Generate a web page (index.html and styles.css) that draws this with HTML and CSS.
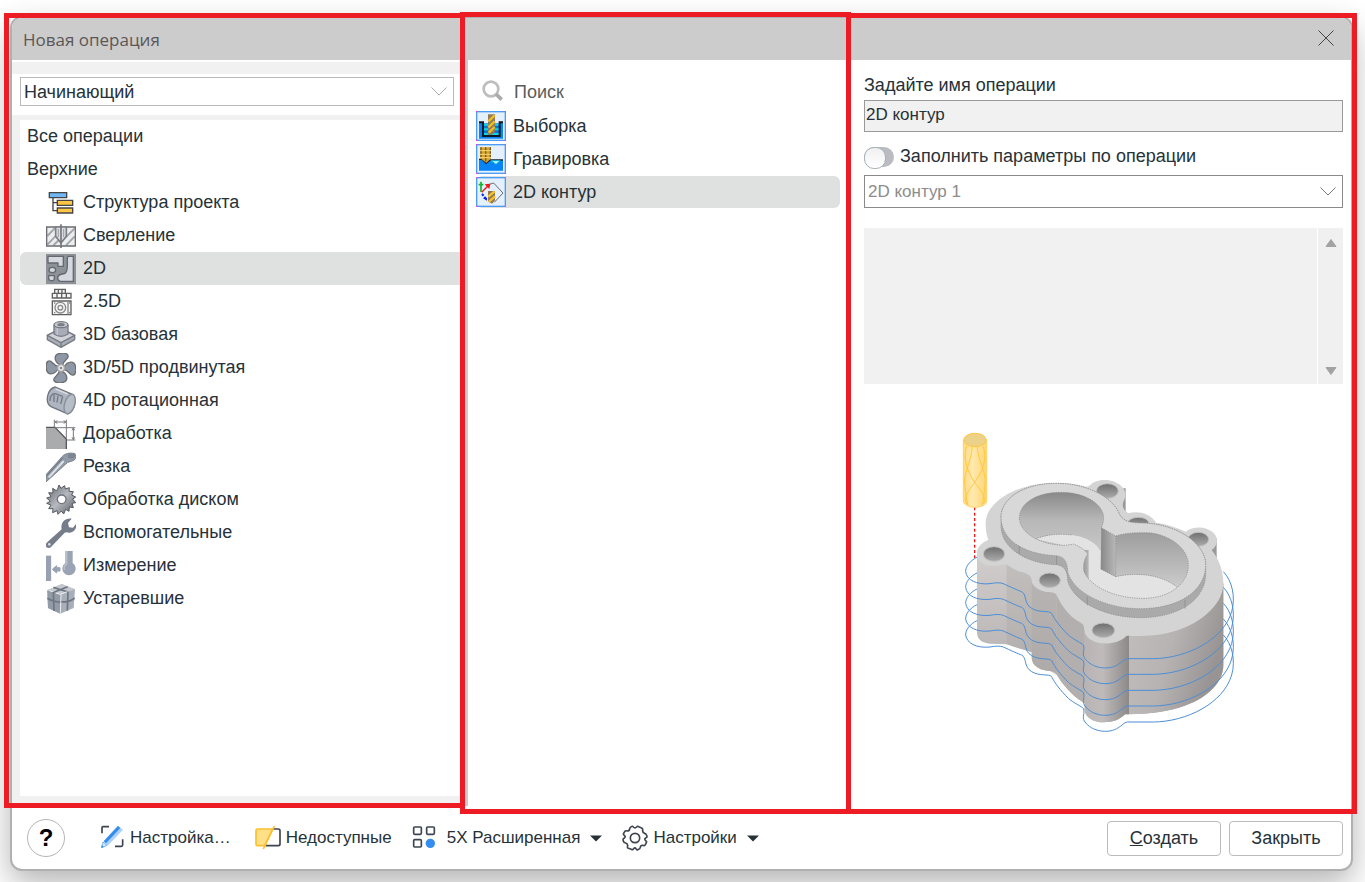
FILE: index.html
```html
<!DOCTYPE html>
<html lang="ru">
<head>
<meta charset="utf-8">
<meta name="viewport" content="width=device-width, initial-scale=1">
<title>Новая операция</title>
<link rel="stylesheet" href="styles.css">
</head>
<body>
<main class="window">
  <header class="titlebar">
    <h1 class="title">Новая операция</h1>
    <button class="close" type="button" aria-label="Закрыть окно">
      <svg width="16" height="16" viewBox="0 0 16 16"><path d="M0.5 0.5 15.5 15.5M15.5 0.5 0.5 15.5" stroke="#444" fill="none"/></svg>
    </button>
  </header>

  <div class="panes">
    <section class="pane pane-groups" aria-label="Группы операций">
      <div class="strip"></div>
      <div class="level">
        <div class="select-box">
          <select class="select select-level" aria-label="Уровень"><option>Начинающий</option></select>
          <svg class="chevron chevron-light" width="16" height="9" viewBox="0 0 16 9"><path d="M0.5 0.5 8 8 15.5 0.5"/></svg>
        </div>
      </div>
      <div class="group-frame">
        <ul class="groups">
          <li><button class="row" type="button">Все операции</button></li>
          <li><button class="row" type="button">Верхние</button></li>
          <li><button class="row row-child" type="button">
            <svg class="icon" viewBox="0 0 90 90" fill="none" stroke="#444" stroke-width="4"><path d="M21 29V68H34M21 44H34"/><path d="M10 14H62V29H10Z" fill="#6fb7f5"/><path d="M34 37H80V52H34ZM34 60H80V75H34Z" fill="#fcc545"/></svg>
            Структура проекта</button></li>
          <li><button class="row row-child" type="button">
            <svg class="icon" viewBox="0 0 90 90" fill="none"><path d="M2 18H88V75H2Z" fill="#eceef0"/><path d="M4 45 28 20M4 71 36 38M22 73 46 50M60 73 86 46M60 48 86 22" stroke="#a4a7ab" stroke-width="6"/><path d="M2 18H88V75H2Z" stroke="#6a6d72" stroke-width="4"/><path d="M29 18V46L45 66 61 46V18Z" fill="#dcdee2" stroke="#7b7e84" stroke-width="5"/><path d="M45 10V81" stroke="#73777d" stroke-width="5"/><path d="M37 24V48M53 24V48" stroke="#9a9da3" stroke-width="3"/></svg>
            Сверление</button></li>
          <li><button class="row row-child selected" type="button">
            <svg class="icon" viewBox="0 0 90 90" stroke="#636871" stroke-width="4" stroke-linejoin="round" fill="#d5d8de"><path d="M0 0H90V90H0Z" fill="#8d9299" stroke="none"/><path d="M6 7H52V37H36V27H6Z"/><path d="M68 7H82V82H42C30 76 34 62 48 60C62 61 64 48 64 34V14Q64 7 68 7Z"/><ellipse cx="19" cy="48" rx="10" ry="8"/><path d="M8 65H25V72Q25 82 15 80Q8 80 8 72Z"/></svg>
            2D</button></li>
          <li><button class="row row-child" type="button">
            <svg class="icon" viewBox="0 0 90 90" fill="#f5f5f5" stroke="#606060" stroke-width="4"><path d="M26 7H58V19H26ZM37 7V19M48 7V19M19 19H75V33H19ZM33 19V33M47 19V33M61 19V33M19 42H75V83H19Z"/><circle cx="43" cy="62" r="16" stroke="#8a8a8a"/><circle cx="43" cy="62" r="7" stroke="#8a8a8a"/><path d="M66 43V82M24 48H28M24 77H28M69 48H73M69 77H73" stroke="#888"/></svg>
            2.5D</button></li>
          <li><button class="row row-child" type="button">
            <svg class="icon" viewBox="0 0 90 90" stroke="#777b83" stroke-width="4" stroke-linejoin="round"><path d="M4 46 45 25 86 46V59L45 82 4 59Z" fill="#a9adb7"/><path d="M4 46 45 25 86 46 45 68Z" fill="#d1d3d8"/><path d="M45 68V82"/><path d="M24 14V42Q45 56 66 42V14" fill="#a7acb7"/><ellipse cx="45" cy="14" rx="21" ry="9" fill="#c7c9cf"/><ellipse cx="45" cy="14" rx="9" ry="3" fill="#82868f"/><path d="M34 24V45" stroke="#c5c8d0"/></svg>
            3D базовая</button></li>
          <li><button class="row row-child" type="button">
            <svg class="icon" viewBox="0 0 90 90" fill="#8e97a6" stroke="#6d6e72" stroke-width="4"><path d="M42 36C24 25 21 4 43 1C67-2 72 10 60 20C53 26 51 31 50 37Z"/><path d="M54 42C65 24 86 21 89 43C92 67 80 72 70 60C64 53 59 51 53 50Z"/><path d="M48 54C66 65 69 86 47 89C23 92 18 80 30 70C37 64 39 59 40 53Z"/><path d="M36 48C25 66 4 69 1 47C-2 23 10 18 20 30C26 37 31 39 37 40Z"/><circle cx="45" cy="45" r="10" fill="#ececee" stroke="#aaa"/><circle cx="45" cy="45" r="4" fill="#8a8a8a" stroke="none"/></svg>
            3D/5D продвинутая</button></li>
          <li><button class="row row-child" type="button">
            <svg class="icon" viewBox="0 0 90 90" stroke="#6f747d" stroke-width="4"><path d="M28 3 79 25C94 38 87 75 66 84L15 62C-5 49 4 8 28 3Z" fill="#aeb4c0"/><ellipse cx="71" cy="54" rx="15" ry="30" transform="rotate(17 71 54)" fill="#b7bdc7" stroke="#8a909a"/><path d="M12 45C11 32 18 22 27 23L50 31M24 26V48M36 30 33 50M50 31 44 54" fill="none" stroke="#747a84" stroke-width="4"/><path d="M29 9 65 24" stroke="#d5d8de" stroke-width="5"/></svg>
            4D ротационная</button></li>
          <li><button class="row row-child" type="button">
            <svg class="icon" viewBox="0 0 90 90" fill="none"><path d="M0 25H27L61 60V90H0Z" fill="#aaabad"/><path d="M0 25H27L61 60V90" stroke="#55575c" stroke-width="4"/><path d="M25 2V24M61 2V59M27 9H60M34 5 27 9 34 13M53 5 60 9 53 13M27 26H88M62 63H88M82 27V62M78 34 82 27 86 34M78 55 82 62 86 55" stroke="#77797c" stroke-width="3"/></svg>
            Доработка</button></li>
          <li><button class="row row-child" type="button">
            <svg class="icon" viewBox="0 0 90 90" stroke="#7b838e" stroke-width="3" stroke-linejoin="round"><path d="M0 68 45 18C54 4 72 1 87 5L90 17C88 25 76 28 65 31L0 90Z" fill="#919aa7"/><path d="M8 76 53 27" stroke="#dfe2e7" stroke-width="6"/><path d="M0 73 51 17" stroke="#687079"/><ellipse cx="76" cy="12" rx="10" ry="6" fill="#7e8692"/></svg>
            Резка</button></li>
          <li><button class="row row-child" type="button">
            <svg class="icon" viewBox="0 0 90 90"><defs><linearGradient id="disc" x2="1" y2="1"><stop stop-color="#62666e"/><stop offset=".5" stop-color="#b6b9bf"/><stop offset="1" stop-color="#565a61"/></linearGradient></defs><path d="M35 12 39 0 45 10 56 2 58 12 70 8 69 19 82 20 77 30 89 36 80 42 89 53 78 55 82 68 70 66 69 79 59 73 53 87 46 78 36 88 33 77 20 83 21 71 8 71 15 60 2 55 13 49 2 39 15 35 8 23 21 24 20 10 31 17Z" fill="url(#disc)" stroke="#555960" stroke-width="3"/><circle cx="47" cy="43" r="13" fill="#fff" stroke="#70747b" stroke-width="4"/></svg>
            Обработка диском</button></li>
          <li><button class="row row-child" type="button">
            <svg class="icon" viewBox="0 0 90 90"><path d="M77 2 66 15 69 28 81 29 90 18C94 34 79 48 62 43L56 44 18 84C14 91 5 91 1 87C-3 82 0 75 5 71L47 34C43 16 55-1 77 2Z" fill="#747d89"/><circle cx="10" cy="79" r="4" fill="#d4d8de"/></svg>
            Вспомогательные</button></li>
          <li><button class="row row-child" type="button">
            <svg class="icon" viewBox="0 0 90 90"><path d="M0 14H14V90H0Z" fill="#98a1b2"/><path d="M14 14V90" stroke="#81899a" stroke-width="2"/><path d="M19 55 32 44V50H42V60H32V66Z" fill="#98a1b2" stroke="#98a1b2" stroke-width="3"/><path d="M58 0H80V36A20 20 0 1 1 58 36Z" fill="#9aa3b3"/><path d="M62 0V39A14 14 0 0 0 56 57" fill="none" stroke="#b8bfca" stroke-width="5"/></svg>
            Измерение</button></li>
          <li><button class="row row-child" type="button">
            <svg class="icon" viewBox="0 0 90 90"><path d="M4 19 47 0 87 16 83 72 43 89 6 72Z" fill="#a9afb9"/><path d="M4 19 45 31 43 89 6 72Z" fill="#939ba7"/><path d="M4 19 47 1 87 16 45 31Z" fill="#c5c9cf"/><path d="M4 43Q30 57 45 53Q68 57 86 42M22 24 24 81M66 23 64 80M22 10 66 24M65 8 24 25" fill="none" stroke="#6e7683" stroke-width="5"/><path d="M45 31 43 89M10 20 20 23M29 27 43 31 64 23" fill="none" stroke="#eceef1" stroke-width="3"/></svg>
            Устаревшие</button></li>
        </ul>
      </div>
    </section>

    <section class="pane pane-operations" aria-label="Операции">
      <label class="search">
        <svg class="icon" viewBox="0 0 90 90" fill="none"><circle cx="45" cy="33" r="22" stroke="#bdbdbd" stroke-width="8"/><path d="M60 48 77 65" stroke="#aaa" stroke-width="11"/></svg>
        <input class="search-input" type="search" placeholder="Поиск">
      </label>
      <ul class="operations">
        <li><button class="row row-op" type="button">
          <svg class="icon" viewBox="0 0 90 90"><path d="M0 0H90V90H0Z" fill="#f442ef"/><path d="M0 4H4V0H86V4H90V86H86V90H4V86H0Z" fill="#4a9cf4"/><path d="M4 4H86V86H4Z" fill="#e4f0fc"/><path d="M9 36H22V76H69V36H81V83H9Z" fill="#0784f6"/><path d="M22 37H69V74H22Z" fill="#0876d8"/><path d="M22 41H69M22 55H69M22 69H69" stroke="#06d8f0" stroke-width="6"/><path d="M9 34H21V75H71V34H81" fill="none" stroke="#101822" stroke-width="6"/><path d="M36 10H57V63L48 71H36Z" fill="#8f7c58"/><path d="M37 31 56 13M37 49 56 31M38 65 56 48" stroke="#f4bd23" stroke-width="7"/></svg>
          Выборка</button></li>
        <li><button class="row row-op" type="button">
          <svg class="icon" viewBox="0 0 90 90"><path d="M0 0H90V90H0Z" fill="#f442ef"/><path d="M0 4H4V0H86V4H90V86H86V90H4V86H0Z" fill="#4a9cf4"/><path d="M4 4H86V86H4Z" fill="#e4f0fc"/><path d="M9 46 18 48 30 59 42 49 59 61 73 48H81V80H9Z" fill="#0784f6"/><path d="M9 46H18L30 58 42 48H81" fill="none" stroke="#172333" stroke-width="4"/><path d="M45 50H73L60 61Z" fill="#b1ffff" stroke="#00a5d8" stroke-width="3"/><path d="M12 10H45V43L31 56 12 42Z" fill="#d5a32c"/><path d="M15 10V43M29 10V52M43 10V43" stroke="#735b31" stroke-width="4"/><path d="M12 20H45M12 31H45M12 41H45" stroke="#f5d978" stroke-width="3"/></svg>
          Гравировка</button></li>
        <li><button class="row row-op selected" type="button">
          <svg class="icon" viewBox="0 0 90 90"><path d="M0 0H90V90H0Z" fill="#f442ef"/><path d="M0 4H4V0H86V4H90V86H86V90H4V86H0Z" fill="#4a9cf4"/><path d="M4 4H86V86H4Z" fill="#e4f0fc"/><path d="M40 22 53 18 81 48 55 76" fill="none" stroke="#6d6d6d" stroke-width="3"/><path d="M17 46 35 28" stroke="#f21818" stroke-width="4"/><path d="M26 22 43 20 40 36Z" fill="#f21818"/><path d="M15 45V14M8 23H22" stroke="#12b52b" stroke-width="5"/><path d="M18 51 30 65" stroke="#0e1ee8" stroke-width="6" stroke-dasharray="7 4"/><path d="M20 63H33V71Z" fill="#0e1ee8"/><path d="M36 42H57V70L48 80 36 73Z" fill="#96784a"/><path d="M37 59 56 43M38 75 57 58" stroke="#f5c332" stroke-width="7"/></svg>
          2D контур</button></li>
      </ul>
    </section>

    <section class="pane pane-settings" aria-label="Параметры операции">
      <label class="name-label" for="op-name">Задайте имя операции</label>
      <input class="name-input" id="op-name" type="text" value="2D контур">
      <label class="fill"><input class="toggle" type="checkbox" role="switch"><span>Заполнить параметры по операции</span></label>
      <div class="select-box">
        <select class="select select-source" aria-label="Операция-источник"><option>2D контур 1</option></select>
        <svg class="chevron" width="16" height="9" viewBox="0 0 16 9"><path d="M0.5 0.5 8 8 15.5 0.5"/></svg>
      </div>
      <div class="note">
        <textarea class="note-text" aria-label="Описание" readonly></textarea>
        <div class="scroll">
          <button class="scroll-button" type="button" aria-label="Вверх"><svg width="12" height="10" viewBox="0 0 12 10"><path d="M6 1.5 11 8.5H1Z"/></svg></button>
          <button class="scroll-button" type="button" aria-label="Вниз"><svg width="12" height="10" viewBox="0 0 12 10"><path d="M6 8.5 11 1.5H1Z"/></svg></button>
        </div>
      </div>
      <svg class="drawing" viewBox="0 0 981 990" role="img" aria-label="Обработка контура детали">
        <defs>
          <linearGradient id="side" x2="0" y2="1"><stop stop-color="#d0cdcc"/><stop offset="1" stop-color="#aaa7a6"/></linearGradient>
          <linearGradient id="front"><stop stop-color="#b9b4b3"/><stop offset=".4" stop-color="#bfbbba"/><stop offset="1" stop-color="#8d8988"/></linearGradient>
          <linearGradient id="drum" x2="1" y2=".4"><stop stop-color="#c3bfbe"/><stop offset=".55" stop-color="#b7b3b2"/><stop offset="1" stop-color="#989494"/></linearGradient>
          <linearGradient id="wall" x2="0" y2="1"><stop stop-color="#858585"/><stop offset=".5" stop-color="#b7b7b7"/><stop offset="1" stop-color="#c6c6c6"/></linearGradient>
          <linearGradient id="wall-right" x2="0" y2="1"><stop stop-color="#9b9b9b"/><stop offset="1" stop-color="#cecece"/></linearGradient>
          <linearGradient id="corner"><stop stop-color="#888"/><stop offset="1" stop-color="#b8b8b8"/></linearGradient>
          <linearGradient id="hole" x2="0" y2="1"><stop stop-color="#6f6f6f"/><stop offset="1" stop-color="#acacac"/></linearGradient>
          <linearGradient id="cutter"><stop stop-color="#ffda82"/><stop offset=".4" stop-color="#ffe9ae"/><stop offset="1" stop-color="#ffd574"/></linearGradient>
          <clipPath id="pocket"><path d="M238 295C238 250 290 217 362 217C440 217 491 255 491 295C490 310 486 318 484 323L527 348C560 337 600 337 635 339C700 350 745 390 745 435C745 490 690 535 610 535C530 535 455 505 432 455C428 430 435 415 443 402C435 388 415 378 401 372C380 377 360 377 340 373C300 368 240 340 238 295Z"/></clipPath>
          <path id="pass" d="M111 412C90 422 76 440 77 455C80 480 110 495 150 491C165 488 180 487 190 491C210 500 235 512 245 515C262 525 250 550 275 565C300 580 325 570 335 580C345 600 360 620 385 645C400 658 425 670 430 675C436 690 425 700 433 713C455 747 508 752 535 733C545 728 552 717 562 716L640 716C740 715 850 660 875 575C888 530 875 480 850 455"/>
        </defs>
        <path d="M111 400V640Q113 668 150 671L200 673C225 683 250 688 275 697V715C277 742 305 752 330 753C350 755 355 770 362 782C385 812 410 838 434 848V870C436 895 465 907 490 907C520 907 540 898 555 883C600 882 640 882 700 868C790 845 850 795 850 735V490L800 430H300Z" fill="url(#side)"/>
        <path d="M200 430 275 470V697L200 673Z" fill="#a9a5a4" opacity=".35"/>
        <path d="M275 480V715C277 742 305 752 330 753L350 765V515Z" fill="#a8a4a3" opacity=".55"/>
        <path d="M350 520 434 610V848C410 838 385 812 362 782L350 765Z" fill="#b3afae"/>
        <path d="M434 630V870C436 895 465 907 490 907C520 907 540 898 555 883H567V640Z" fill="url(#front)"/>
        <path d="M567 645C640 650 820 620 850 490V735C850 795 790 845 700 868C640 882 600 882 567 882Z" fill="url(#drum)"/>
        <path d="M535 205H557V282L530 272ZM800 355H830V420L800 400Z" fill="#999"/>
        <g fill="none" stroke="#4c8ed6" stroke-width="3">
          <use href="#pass"/><use href="#pass" y="47"/><use href="#pass" y="95"/><use href="#pass" y="142"/><use href="#pass" y="190"/>
        </g>
        <path d="M111 400C111 380 125 368 145 360C135 330 130 290 155 262C180 230 220 208 270 197C300 188 380 183 440 200C450 200 452 190 465 185C490 175 530 178 550 205C560 220 557 235 550 245C545 262 552 270 565 280C590 272 630 278 648 308C680 312 710 322 737 335C760 318 800 318 822 340C836 355 832 380 815 390C835 415 850 450 850 490C850 560 770 620 680 640C640 650 590 648 560 647C545 665 510 672 490 670C460 668 435 655 433 630C433 618 430 612 415 604C390 590 365 560 350 525C345 515 330 518 315 515C290 508 275 495 275 482C275 465 260 458 240 455C220 448 205 435 195 432C170 440 140 440 125 428C112 420 111 410 111 400Z" fill="#d4d4d4"/>
        <g fill="url(#hole)" stroke="#c1c1c1" stroke-width="3"><ellipse cx="502" cy="213" rx="33" ry="22"/><ellipse cx="595" cy="310" rx="32" ry="18"/><ellipse cx="775" cy="358" rx="31" ry="21"/><ellipse cx="162" cy="402" rx="32" ry="22"/><ellipse cx="329" cy="481" rx="32" ry="22"/><ellipse cx="490" cy="631" rx="34" ry="22"/></g>
        <path d="M183 290C185 235 250 190 350 190C430 190 510 225 535 275C545 300 560 308 600 309C700 308 797 365 797 435V462C797 537 720 593 600 593C500 593 400 548 383 482C383 457 375 437 350 434C270 432 183 390 183 317Z" fill="#aaa" stroke="#888" stroke-width="2" stroke-dasharray="4 3"/>
        <path d="M183 290C185 235 250 190 350 190C430 190 510 225 535 275C545 300 560 308 600 309C700 308 797 365 797 435C797 510 720 566 600 566C500 566 400 520 383 455C383 430 375 410 350 407C270 405 183 370 183 290Z" fill="#d8d8d8" stroke="#8b8b8b" stroke-width="2" stroke-dasharray="4 3"/>
        <path d="M238 378V402M350 408V433M442 530V556M735 540V566" stroke="#888" stroke-width="2"/>
        <g clip-path="url(#pocket)">
          <path d="M230 210H500V390H230Z" fill="url(#wall)"/>
          <path d="M527 330H750V510H527Z" fill="url(#wall-right)"/>
          <path d="M287 357C320 343 360 340 395 345C440 350 480 375 482 400V447L527 470C570 460 650 455 710 500L700 550H440V400L390 380Z" fill="#e3e3e3"/>
          <path d="M484 320 527 348V470L482 447Z" fill="url(#corner)"/>
          <path d="M420 390H446V480H420Z" fill="url(#corner)"/>
          <path d="M287 357C320 343 360 340 395 345M527 470C570 460 650 455 710 500M527 348V470L482 447" fill="none" stroke="#888" stroke-width="2" stroke-dasharray="4 3"/>
        </g>
        <path d="M238 295C238 250 290 217 362 217C440 217 491 255 491 295C490 310 486 318 484 323L527 348C560 337 600 337 635 339C700 350 745 390 745 435C745 490 690 535 610 535C530 535 455 505 432 455C428 430 435 415 443 402C435 388 415 378 401 372C380 377 360 377 340 373C300 368 240 340 238 295Z" fill="none" stroke="#858585" stroke-width="2" stroke-dasharray="4 3"/>
        <path d="M104 262V414" stroke="#f01818" stroke-width="4" stroke-dasharray="9 7"/>
        <path d="M70 60V243C72 268 138 268 140 243V60Z" fill="url(#cutter)" stroke="#ffd36b" stroke-width="3"/>
        <ellipse cx="105" cy="60" rx="34" ry="20" fill="#ecd188" stroke="#ffc83e" stroke-width="3"/>
        <path d="M97 80C94 120 76 150 74 180C75 215 80 235 84 256M111 80C115 120 134 150 136 180C134 215 130 235 125 256M80 78C68 115 82 155 104 187C125 215 140 232 130 252M129 78C143 115 128 155 104 187C84 215 70 232 80 252" fill="none" stroke="#ffc83e" stroke-width="3"/>
      </svg>
    </section>
  </div>

  <footer class="footer">
    <button class="help" type="button" aria-label="Справка">?</button>
    <button class="tool tool-setup" type="button">
      <svg width="26" height="26" viewBox="0 0 78 78" fill="none"><path d="M9 25V8Q9 5 12 5H30M71 43V60Q71 64 67 64H48" stroke="#3f4550" stroke-width="5"/><path d="M56 2 72 14 26 62 14 49Z" fill="#acd2fb"/><path d="M57 3 64 9 21 55 14 49Z" fill="#348cf0"/><path d="M12 51 24 61 8 68Z" fill="#dcecff" stroke="#3b91ef" stroke-width="2"/><path d="M8 60 14 66 7 69Z" fill="#348cf0"/></svg>
      Настройка…</button>
    <button class="tool tool-hidden" type="button">
      <svg width="26" height="26" viewBox="0 0 78 78" fill="none" stroke-width="5"><path d="M52 12H70Q75 12 75 17V57Q75 62 70 62H32" stroke="#3f4550"/><path d="M53 12H8Q3 12 3 17V57Q3 62 8 62H29Z" fill="#ffdf88" stroke="#fbc02e"/><path d="M58 3 25 72" stroke="#fbc02e"/></svg>
      Недоступные</button>
    <button class="tool tool-mode" type="button">
      <svg width="26" height="26" viewBox="0 0 78 78" fill="none" stroke="#3f4550" stroke-width="5"><rect x="8" y="6" width="23" height="22" rx="3"/><rect x="47" y="6" width="23" height="22" rx="3"/><rect x="8" y="44" width="23" height="22" rx="3"/><circle cx="58" cy="55" r="14" fill="#348cf0" stroke="none"/></svg>
      5X Расширенная
      <svg class="caret" width="12" height="7" viewBox="0 0 12 7"><path d="M0 0.5H12L6 6.5Z" fill="#263238"/></svg></button>
    <button class="tool tool-options" type="button">
      <svg width="26" height="26" viewBox="0 0 78 78" fill="none" stroke="#3f4550" stroke-width="5" stroke-linejoin="round"><path d="M28 5Q31 2 34 6Q39 11 44 6Q47 2 50 5L59 9Q63 11 62 16Q61 23 68 25Q73 26 74 31L75 35Q75 38 71 39Q66 42 71 47Q75 49 73 53L70 59Q67 63 62 61Q56 60 55 67Q54 72 49 73L46 75Q43 75 42 71Q39 66 35 71Q32 76 28 73L19 70Q15 68 17 63Q18 56 11 54Q5 53 4 48L3 44Q3 41 7 39Q12 36 7 31Q3 29 5 25L8 20Q10 16 16 18Q22 18 23 12Q23 7 28 5Z"/><circle cx="39" cy="39" r="14"/></svg>
      Настройки
      <svg class="caret" width="12" height="7" viewBox="0 0 12 7"><path d="M0 0.5H12L6 6.5Z" fill="#263238"/></svg></button>
    <div class="actions">
      <button class="action" type="button"><u>С</u>оздать</button>
      <button class="action" type="button">Закрыть</button>
    </div>
  </footer>
</main>
</body>
</html>
```
FILE: styles.css
```css
* {
  box-sizing: border-box;
}

body {
  margin: 0;
  padding: 16px 12px 11px 10px;
  min-height: 100vh;
  display: flex;
  overflow: hidden;
  background: #fff;
  color: #263238;
  font-family: "Liberation Sans", Arial, sans-serif;
  font-size: 18px;
}

button,
input,
select,
textarea {
  font: inherit;
  color: inherit;
  margin: 0;
}

button {
  border: 0;
  padding: 0;
  background: none;
  text-align: left;
}

ul {
  list-style: none;
  margin: 0;
  padding: 0;
}

svg {
  flex: none;
  display: block;
}

.window {
  flex: 1;
  min-width: 0;
  display: flex;
  flex-direction: column;
  border: 2px solid #b0b0b0;
  border-radius: 12px;
  background: #fff;
  box-shadow: 0 12px 32px rgba(0, 0, 0, 0.3);
}

.titlebar {
  height: 42px;
  padding: 0 17px 0 11px;
  display: flex;
  align-items: center;
  justify-content: space-between;
  background: #ccc;
  border-radius: 10px 10px 0 0;
}

.title {
  margin: 0;
  font-family: "Open Sans", "Noto Sans", sans-serif;
  font-size: 17px;
  font-weight: 400;
  color: #5c5657;
}

.close {
  padding-bottom: 2px;
}

.panes {
  flex: 1;
  display: grid;
  grid-template-columns: 451fr 385fr 503fr;
}

.pane {
  position: relative;
  min-width: 0;
  display: flex;
  flex-direction: column;
}

/* Red frame that outlines each pane together with the title bar */
.pane::after {
  content: "";
  position: absolute;
  border: 5px solid #ed1c24;
  pointer-events: none;
}

.pane-groups::after {
  inset: -47px -2px -1px -8px;
  z-index: 1;
}

.pane-operations::after {
  inset: -48px -3px -7px -3px;
  z-index: 2;
}

.pane-settings::after {
  inset: -47px -6px -7px -2px;
  z-index: 1;
}

.strip {
  height: 14px;
  border-top: 2px solid #fff;
  background: #f1f1f1;
}

.level {
  padding: 3px 9px 9px 8px;
}

.select-box {
  display: grid;
  align-items: center;
}

.select {
  grid-area: 1 / 1;
  width: 100%;
  appearance: none;
  background: #fff;
  border: 1px solid #bababa;
  border-radius: 0;
}

.select-level {
  height: 29px;
  padding: 0 24px 0 3px;
}

.select-source {
  height: 33px;
  padding: 0 24px 0 3px;
  border-color: #8a8a8a;
  color: #8c8c8c;
  font-size: 17px;
}

.chevron {
  grid-area: 1 / 1;
  justify-self: end;
  margin-right: 7px;
  fill: none;
  stroke: #777;
  pointer-events: none;
}

.chevron-light {
  stroke: #aaa;
}

.group-frame {
  flex: 1;
  display: flex;
  padding: 5px 0 11px 8px;
  background: #f1f1f1;
}

.groups {
  flex: 1;
  background: #fff;
}

.row {
  width: 100%;
  height: 33px;
  padding-left: 7px;
  display: flex;
  align-items: center;
  gap: 7px;
  border-radius: 6px;
}

.row-child {
  padding-left: 26px;
}

.groups .selected {
  border-radius: 6px 0 0 6px;
}

.row-op {
  height: 32px;
  padding: 0;
}

.selected {
  background: #dfe1e0;
}

.icon {
  width: 30px;
  height: 30px;
}

.pane-operations {
  padding: 16px 8px 0 13px;
}

.pane-operations::before {
  content: "";
  position: absolute;
  inset: 0 auto 1px 0;
  width: 5px;
  background: #ccc;
}

.search {
  height: 33px;
  margin-bottom: 1px;
  display: flex;
  align-items: center;
  gap: 8px;
}

.search-input {
  flex: 1;
  min-width: 0;
  padding: 0;
  border: 0;
  outline: 0;
  background: none;
  appearance: none;
}

.search-input::placeholder {
  color: #5c5c5c;
  opacity: 1;
}

.operations {
  display: grid;
  gap: 1px;
}

.pane-settings {
  padding: 14px 8px 0 16px;
}

.name-label {
  height: 26px;
  line-height: 23px;
}

.name-input {
  width: 100%;
  height: 32px;
  padding: 0 1px 3px;
  border: 1px solid #999;
  background: #f1f1f1;
  font-size: 17px;
}

.fill {
  height: 43px;
  padding-top: 6px;
  display: flex;
  align-items: center;
  gap: 6px;
}

.toggle {
  appearance: none;
  width: 30px;
  height: 20px;
  border-radius: 10px;
  background: #babcc1;
}

.toggle::before {
  content: "";
  display: block;
  width: 20px;
  height: 20px;
  border: 1px solid #a6b3b7;
  border-radius: 10px;
  background: linear-gradient(#f0f0f0, #fff);
}

.note {
  margin-top: 20px;
  height: 156px;
  display: flex;
  gap: 1px;
}

.note-text {
  flex: 1;
  min-width: 0;
  border: 0;
  padding: 4px;
  resize: none;
  background: #f1f1f1;
}

.scroll {
  width: 25px;
  padding: 5px 0 3px;
  display: flex;
  flex-direction: column;
  justify-content: space-between;
  background: #f0f0f0;
}

.scroll-button {
  height: 20px;
  display: grid;
  place-items: center;
}

.scroll-button path {
  fill: #a2a2a2;
  stroke: #a2a2a2;
  stroke-linejoin: round;
}

.drawing {
  width: 327px;
  margin: 36px auto 0;
}

.footer {
  height: 62px;
  padding: 0 8px 0 15px;
  display: flex;
  align-items: center;
  font-size: 17px;
}

.help {
  width: 38px;
  height: 38px;
  border: 1px solid #b5b5b5;
  border-radius: 19px;
  text-align: center;
  font-size: 24px;
  font-weight: 700;
  color: #000;
}

.tool {
  display: flex;
  align-items: center;
  gap: 5px;
  white-space: nowrap;
}

.tool-setup {
  margin-left: 34px;
}

.tool-hidden {
  margin-left: 24px;
}

.tool-mode {
  margin-left: 19px;
  gap: 10px;
}

.tool-options {
  margin-left: 20px;
}

.tool-options .caret {
  margin-left: 5px;
}

.actions {
  margin-left: auto;
  display: flex;
  gap: 8px;
}

.action {
  width: 114px;
  height: 35px;
  border: 1px solid #bbb;
  border-radius: 4px;
  text-align: center;
  font-size: 18px;
}
```
